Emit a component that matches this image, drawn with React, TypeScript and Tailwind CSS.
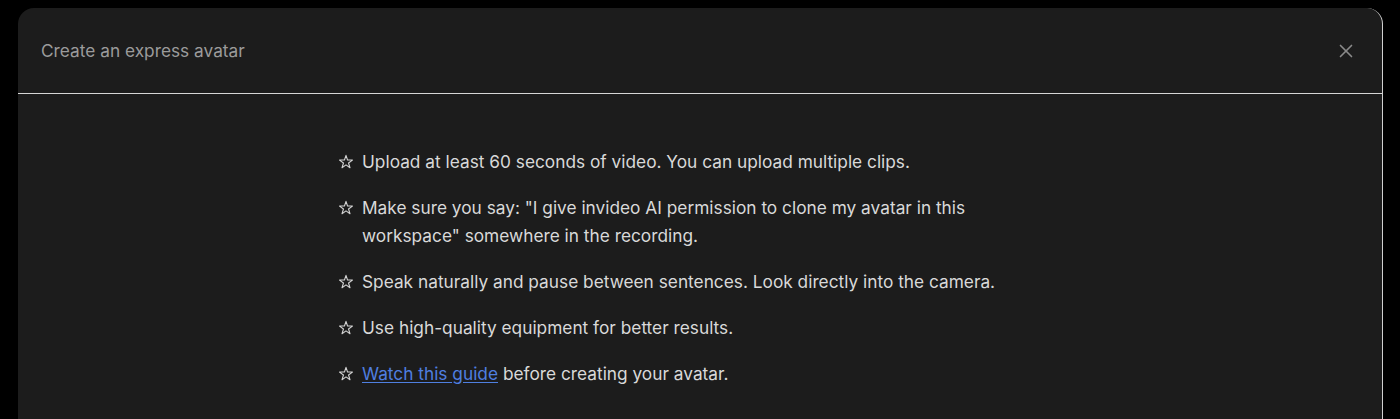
import { X } from 'lucide-react';

const tips: React.ReactNode[] = [
  'Upload at least 60 seconds of video. You can upload multiple clips.',
  'Make sure you say: "I give invideo AI permission to clone my avatar in this workspace" somewhere in the recording.',
  'Speak naturally and pause between sentences. Look directly into the camera.',
  'Use high-quality equipment for better results.',
  <>
    <a href="#" className="text-[#4f7fe0] underline underline-offset-2">
      Watch this guide
    </a>{' '}
    before creating your avatar.
  </>,
];

function StarBullet() {
  return (
    <svg viewBox="0 0 24 24" className="w-[16px] h-[16px] shrink-0 mt-[6px]" fill="none" stroke="#d4d4d4" strokeWidth={1.6} strokeLinejoin="round">
      <path d="M12 2l2.3 7 7.4.1-5.9 4.4 2.2 7.1L12 16.3l-6 4.3 2.2-7.1-5.9-4.4 7.4-.1z" />
    </svg>
  );
}

export default function App() {
  return (
    <div className="min-h-screen bg-black pt-2 pl-[18px] pr-[17px] font-['Inter',sans-serif]">
      <div className="bg-[#1c1c1c] rounded-t-2xl border-r border-[#d0d0d0] h-[411px]">
        <div className="h-[86px] flex items-center justify-between pl-[23px] pr-[23px] border-b border-[#d6d6d6]">
          <h2 className="text-[17.3px] text-[#9b9b9b]">Create an express avatar</h2>
          <button className="text-[#8a8a8a] p-0.5">
            <X size={22} strokeWidth={1.8} />
          </button>
        </div>
        <div className="flex justify-center pt-[54px]">
          <ul className="w-[724px] flex flex-col gap-[18px] text-[17.3px] leading-7 text-[#d9d9d9]">
            {tips.map((tip, i) => (
              <li key={i} className="flex items-start gap-[8px]">
                <StarBullet />
                <span className="max-w-[680px]">{tip}</span>
              </li>
            ))}
          </ul>
        </div>
      </div>
    </div>
  );
}
